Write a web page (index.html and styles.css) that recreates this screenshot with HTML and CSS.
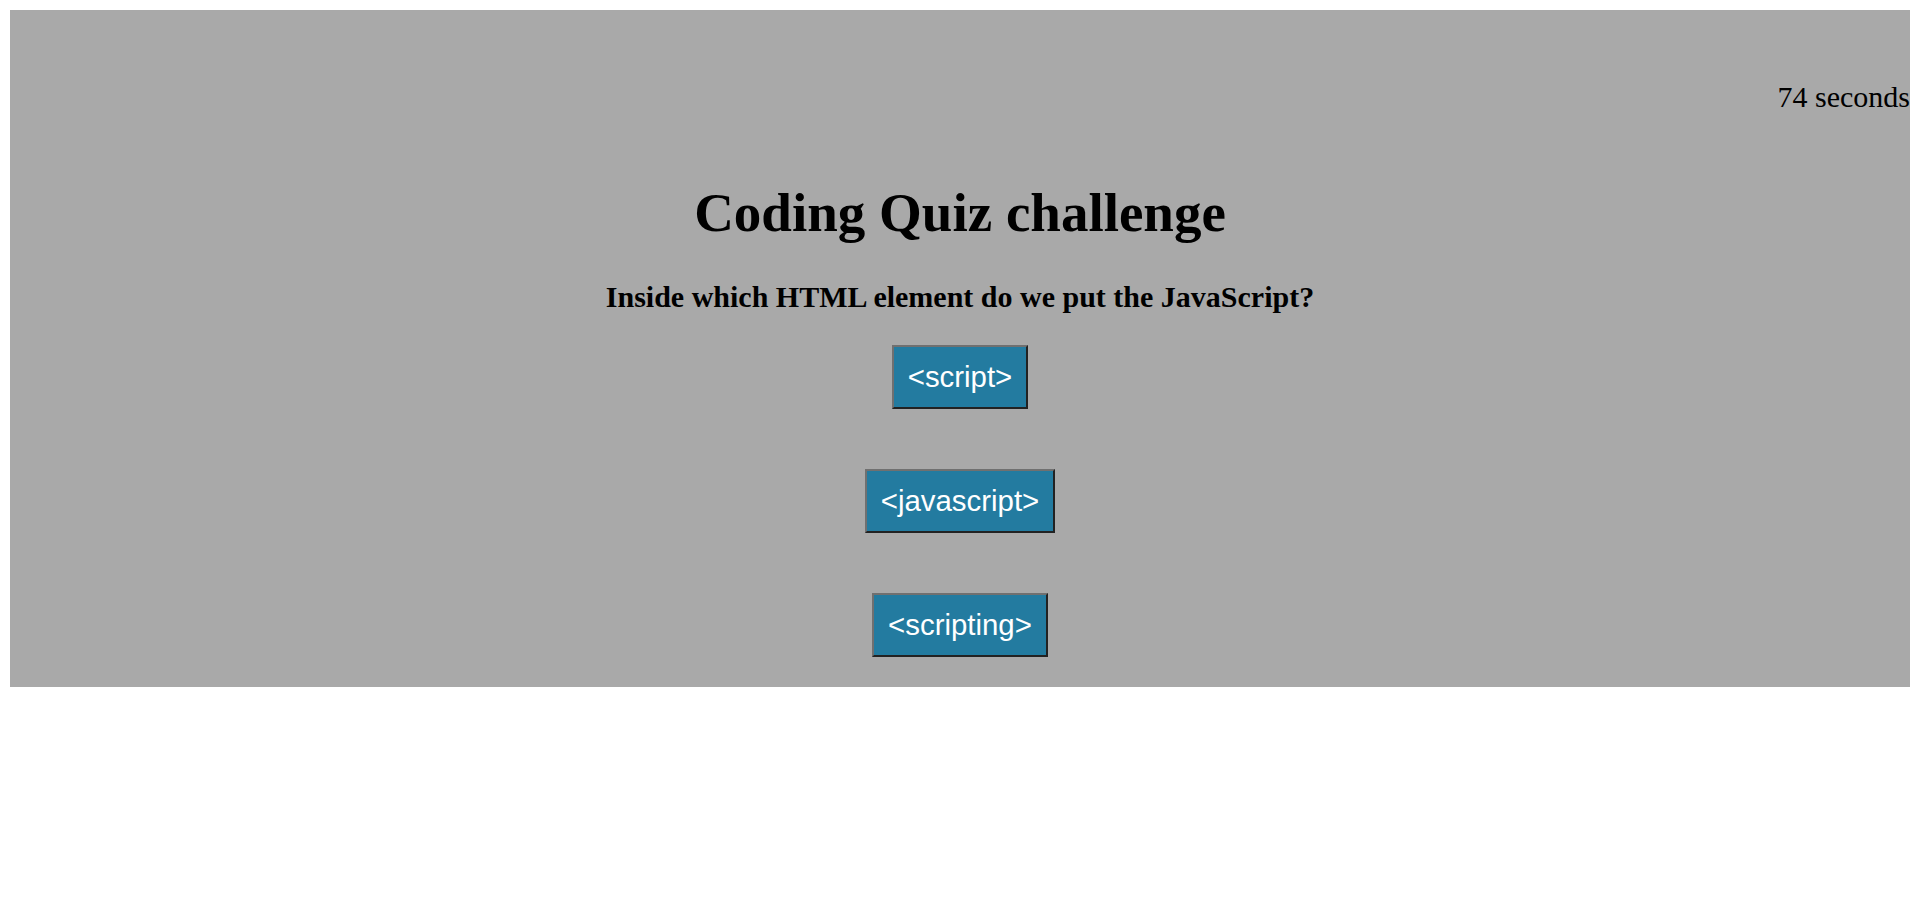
FILE: index.html
```html
<!DOCTYPE html>
<html lang="en">
<head>
<meta charset="utf-8">
<title>Coding Quiz challenge</title>
<link rel="stylesheet" href="styles.css">
</head>
<body>
<main class="quiz">
  <div class="timer">74 seconds</div>
  <h1 class="title">Coding Quiz challenge</h1>
  <h2 class="question">Inside which HTML element do we put the JavaScript?</h2>
  <div class="answers">
    <button class="answer">&lt;script&gt;</button>
    <button class="answer">&lt;javascript&gt;</button>
    <button class="answer">&lt;scripting&gt;</button>
  </div>
</main>
</body>
</html>
```
FILE: styles.css
```css
html, body {
  margin: 0;
  padding: 0;
  background: #ffffff;
}

body {
  padding: 10px;
  font-family: "Liberation Serif", "Times New Roman", serif;
  color: #000;
}

.quiz {
  background: #a9a9a9;
  display: flex;
  flex-direction: column;
  padding: 70px 0 30px;
}

.timer {
  text-align: right;
  font-size: 30px;
  line-height: 34px;
}

.title {
  margin: 67px 0 0;
  text-align: center;
  font-size: 55px;
  line-height: 64px;
  font-weight: bold;
}

.question {
  margin: 35px 0 0;
  text-align: center;
  font-size: 30px;
  line-height: 34px;
  font-weight: bold;
}

.answers {
  margin-top: 31px;
  display: flex;
  flex-direction: column;
  align-items: center;
  gap: 60px;
}

.answer {
  font-family: "Liberation Sans", Arial, sans-serif;
  font-size: 29.4px;
  line-height: 34px;
  padding: 13px 14px;
  color: #ffffff;
  background: #237ba0;
  border: 2px solid;
  border-color: #707070 #222222 #222222 #707070;
  border-radius: 0;
  margin: 0;
  cursor: pointer;
}
```
